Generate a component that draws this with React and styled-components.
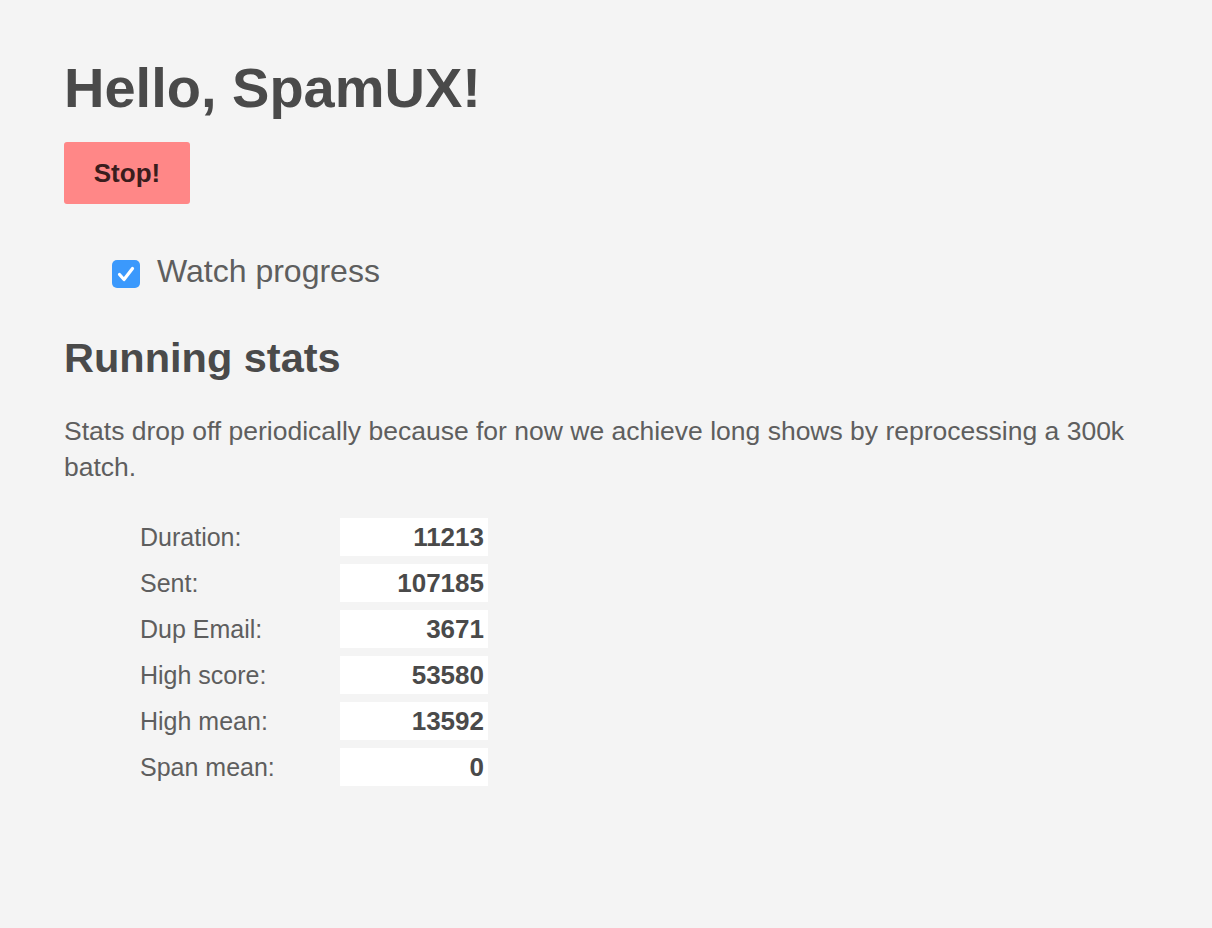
import React from "react";
import styled, { createGlobalStyle } from "styled-components";

const GlobalStyle = createGlobalStyle`
  body {
    margin: 0;
    background: #f4f4f4;
    font-family: "Liberation Sans", Arial, Helvetica, sans-serif;
    color: #4a4a4a;
  }
`;

const Page = styled.div`
  padding: 54px 64px 40px;
  min-height: 928px;
  box-sizing: border-box;
`;

const Title = styled.h1`
  margin: 0;
  font-size: 56px;
  line-height: 67px;
  font-weight: 700;
  color: #4a4a4a;
`;

const StopButton = styled.button`
  display: block;
  margin-top: 21px;
  width: 126px;
  height: 62px;
  border: none;
  border-radius: 3px;
  background: #ff8787;
  color: #3a1d1d;
  font-family: inherit;
  font-size: 26px;
  font-weight: 700;
  cursor: pointer;
`;

const WatchRow = styled.label`
  display: flex;
  align-items: center;
  gap: 17px;
  margin-top: 50px;
  padding-left: 48px;
  height: 40px;
  font-size: 32px;
  line-height: 40px;
  color: #5e5e5e;
  cursor: pointer;
`;

const Text = styled.span`
  position: relative;
  top: -3px;
`;

const Box = styled.span`
  display: flex;
  align-items: center;
  justify-content: center;
  width: 28px;
  height: 28px;
  border-radius: 5px;
  background: ${(p) => (p.checked ? "#3b99fc" : "#fff")};
  border: ${(p) => (p.checked ? "none" : "1px solid #aaa")};
  box-sizing: border-box;
`;

const SectionTitle = styled.h2`
  margin: 39px 0 0;
  font-size: 41.5px;
  line-height: 50px;
  font-weight: 700;
  color: #4a4a4a;
`;

const Note = styled.p`
  margin: 30px 0 0;
  max-width: 1084px;
  font-size: 26.5px;
  line-height: 36px;
  color: #5e5e5e;
`;

const Stats = styled.div`
  display: grid;
  grid-template-columns: 200px 148px;
  row-gap: 8px;
  margin-top: 33px;
  padding-left: 76px;
`;

const Label = styled.div`
  font-size: 25px;
  line-height: 38px;
  color: #5e5e5e;
`;

const Value = styled.div`
  height: 38px;
  background: #fff;
  padding-right: 4px;
  text-align: right;
  font-size: 26px;
  line-height: 38px;
  font-weight: 700;
  color: #4a4a4a;
`;

const rows = [
  ["Duration:", 11213],
  ["Sent:", 107185],
  ["Dup Email:", 3671],
  ["High score:", 53580],
  ["High mean:", 13592],
  ["Span mean:", 0],
];

const Check = () => (
  <svg width="28" height="28" viewBox="0 0 28 28">
    <path
      d="M7.5 14.5 L12 19.5 L20.5 8.5"
      fill="none"
      stroke="#fff"
      strokeWidth="3.2"
      strokeLinecap="round"
      strokeLinejoin="round"
    />
  </svg>
);

export default function App() {
  const [watch, setWatch] = React.useState(true);
  return (
    <Page>
      <GlobalStyle />
      <Title>Hello, SpamUX!</Title>
      <StopButton>Stop!</StopButton>
      <WatchRow onClick={() => setWatch(!watch)}>
        <Box checked={watch}>{watch && <Check />}</Box>
        <Text>Watch progress</Text>
      </WatchRow>
      <SectionTitle>Running stats</SectionTitle>
      <Note>
        Stats drop off periodically because for now we achieve long shows by
        reprocessing a 300k batch.
      </Note>
      <Stats>
        {rows.map(([label, value]) => (
          <React.Fragment key={label}>
            <Label>{label}</Label>
            <Value>{value}</Value>
          </React.Fragment>
        ))}
      </Stats>
    </Page>
  );
}
